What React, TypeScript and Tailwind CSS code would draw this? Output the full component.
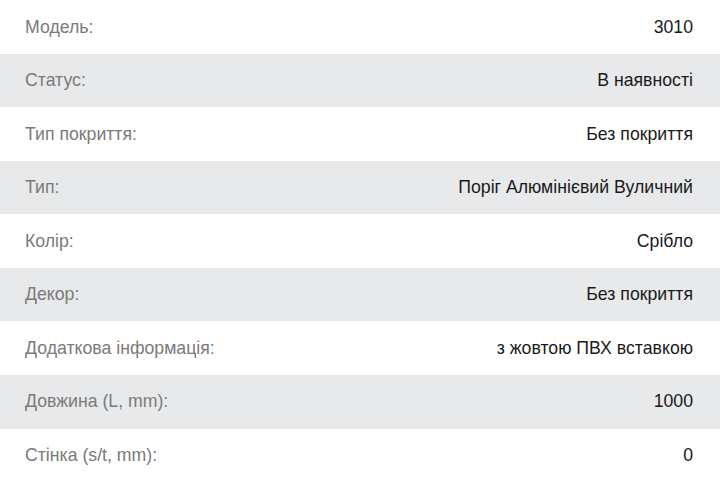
const rows: [string, string][] = [
  ["Модель:", "3010"],
  ["Статус:", "В наявності"],
  ["Тип покриття:", "Без покриття"],
  ["Тип:", "Поріг Алюмінієвий Вуличний"],
  ["Колір:", "Срібло"],
  ["Декор:", "Без покриття"],
  ["Додаткова інформація:", "з жовтою ПВХ вставкою"],
  ["Довжина (L, mm):", "1000"],
  ["Стінка (s/t, mm):", "0"],
];

export default function App() {
  return (
    <div className="flex h-[482px] w-[720px] flex-col bg-white font-['Liberation_Sans',Arial,sans-serif] text-[17.7px]">
      {rows.map(([k, v], i) => (
        <div
          key={k}
          className={`flex flex-1 items-center justify-between pl-[25px] pr-[27px] ${i % 2 === 1 ? "bg-[#e8e9eb]" : "bg-white"}`}
        >
          <span className="text-[#7a7a7a]">{k}</span>
          <span className="text-[#1a1a1a]">{v}</span>
        </div>
      ))}
    </div>
  );
}
